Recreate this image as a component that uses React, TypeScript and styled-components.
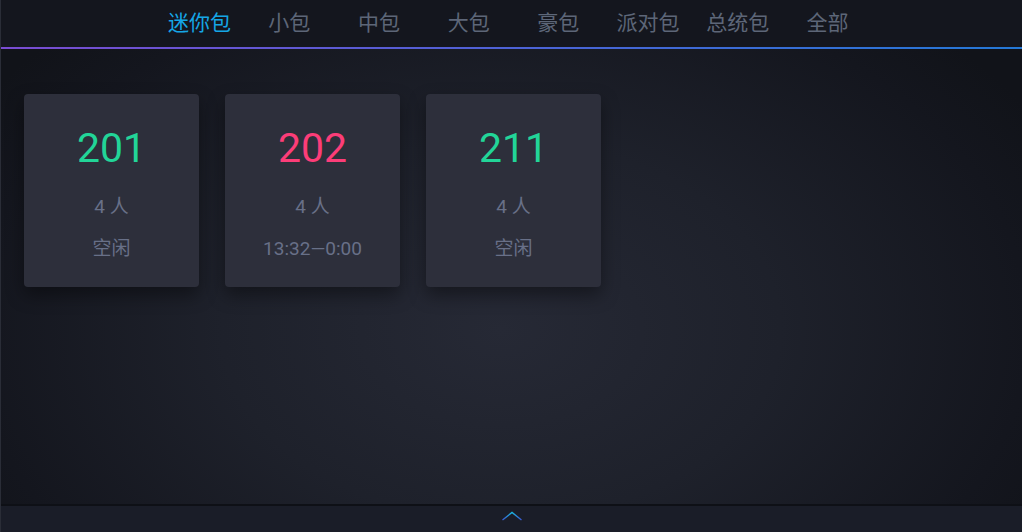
import React from "react";
import styled, { createGlobalStyle } from "styled-components";

const Global = createGlobalStyle`
  html, body { margin: 0; padding: 0; height: 100%; }
  body {
    font-family: Roboto, "Noto Sans CJK SC", "Noto Sans", sans-serif;
    background: #12141b;
    overflow: hidden;
  }
  #root { height: 100%; }
`;

const Page = styled.div`
  width: 1022px;
  height: 532px;
  display: flex;
  flex-direction: column;
  background: radial-gradient(ellipse 620px 420px at 500px 330px, #262935 0%, #1e212b 45%, #14161e 85%, #111319 100%);
  border-left: 1px solid #2a2d37;
  box-sizing: border-box;
`;

const Nav = styled.nav`
  height: 47px;
  flex: none;
  display: flex;
  justify-content: center;
  padding-left: 4px;
  border-bottom: 2px solid transparent;
  border-image: linear-gradient(90deg, #7a4cd2 0%, #4d62d6 50%, #2478d6 100%) 1;
  background: #14161e;
`;

const Tab = styled.div<{ $active?: boolean }>`
  width: 89.7px;
  text-align: center;
  font-size: 21px;
  line-height: 46px;
  color: ${(p) => (p.$active ? "#15a6e6" : "#5d6678")};
`;

const Main = styled.main`
  flex: 1;
  display: flex;
  align-items: flex-start;
  gap: 26px;
  padding: 45px 0 0 23px;
`;

const Card = styled.div`
  width: 175px;
  height: 193px;
  box-sizing: border-box;
  background: #2d2f3b;
  border-radius: 4px;
  box-shadow: 0 8px 18px rgba(0, 0, 0, 0.4);
  display: flex;
  flex-direction: column;
  align-items: center;
  padding-top: 26px;
`;

const RoomNo = styled.div<{ $busy?: boolean }>`
  font-size: 41px;
  line-height: 56px;
  color: ${(p) => (p.$busy ? "#fc3d78" : "#22d598")};
`;

const Info = styled.div`
  font-size: 19px;
  color: #687088;
  line-height: 24px;
  margin-top: 19px;
`;

const Status = styled(Info)`
  margin-top: 18px;
`;

const Footer = styled.footer`
  height: 28px;
  flex: none;
  background: #1a1d28;
  border-top: 2px solid #0e1016;
  display: flex;
  justify-content: center;
  align-items: flex-start;
  padding-top: 5px;
  box-sizing: border-box;
`;

const tabs = ["迷你包", "小包", "中包", "大包", "豪包", "派对包", "总统包", "全部"];
const rooms = [
  { no: "201", people: "4 人", status: "空闲", busy: false },
  { no: "202", people: "4 人", status: "13:32—0:00", busy: true },
  { no: "211", people: "4 人", status: "空闲", busy: false },
];

export default function App() {
  return (
    <>
      <Global />
      <Page>
        <Nav>
          {tabs.map((t, i) => (
            <Tab key={t} $active={i === 0}>
              {t}
            </Tab>
          ))}
        </Nav>
        <Main>
          {rooms.map((r) => (
            <Card key={r.no}>
              <RoomNo $busy={r.busy}>{r.no}</RoomNo>
              <Info>{r.people}</Info>
              <Status>{r.status}</Status>
            </Card>
          ))}
        </Main>
        <Footer>
          <svg width="22" height="10" viewBox="0 0 22 10">
            <defs>
              <linearGradient id="chev" x1="0" y1="0" x2="1" y2="0">
                <stop offset="0" stopColor="#3a56d0" />
                <stop offset="0.5" stopColor="#19b8e0" />
                <stop offset="1" stopColor="#3a56d0" />
              </linearGradient>
            </defs>
            <polyline points="1.5,9 11,1.5 20.5,9" fill="none" stroke="url(#chev)" strokeWidth="1.4" />
          </svg>
        </Footer>
      </Page>
    </>
  );
}
